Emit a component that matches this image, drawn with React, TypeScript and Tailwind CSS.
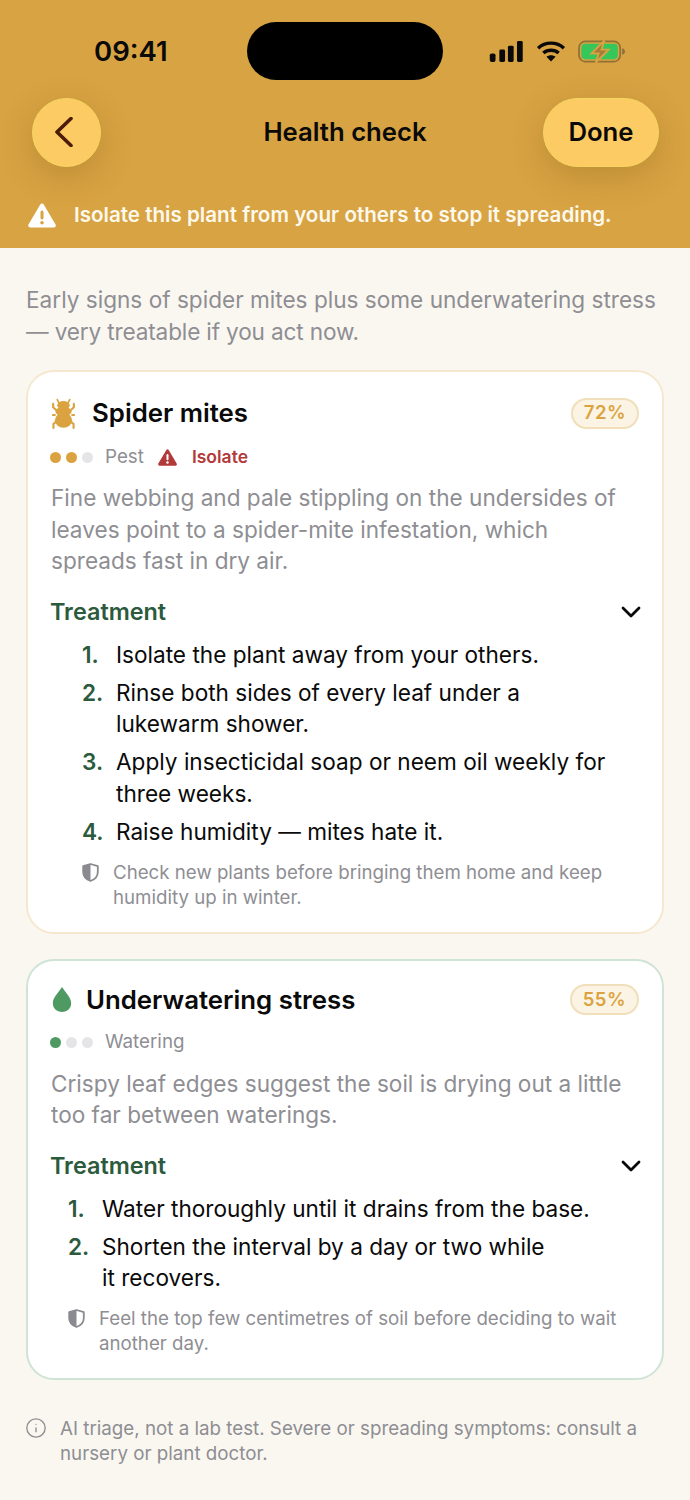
import { Info } from 'lucide-react'

function Signal() {
  return (
    <svg width="35" height="21" viewBox="0 0 35 22" fill="#0a0a0a">
      <rect x="0" y="13" width="6" height="9" rx="2" />
      <rect x="10" y="9" width="6" height="13" rx="1.5" />
      <rect x="19" y="5" width="6" height="17" rx="1.5" />
      <rect x="28.5" y="0" width="6" height="22" rx="1.5" />
    </svg>
  )
}

function Wifi() {
  return (
    <svg width="30" height="21" viewBox="0 0 31 22" fill="none" stroke="#0a0a0a" strokeWidth="3.6">
      <path d="M2 7.5C9.5 0.5 21.5 0.5 29 7.5" />
      <path d="M7.5 12.6C12 8.6 19 8.6 23.5 12.6" />
      <path d="M15.5 21.5L10.8 16.6C13.4 14.5 17.6 14.5 20.2 16.6Z" fill="#0a0a0a" stroke="none" />
    </svg>
  )
}

function Battery() {
  return (
    <svg width="48" height="23" viewBox="0 0 50 24" fill="none">
      <rect x="1" y="1.5" width="43" height="21" rx="6.5" stroke="#8f7138" strokeWidth="1.8" />
      <rect x="3.5" y="4" width="38" height="16" rx="4" fill="#35c759" />
      <path d="M46 8.5c2 .5 3 2 3 3.5s-1 3-3 3.5z" fill="#8f7138" />
      <path d="M27.500 0.500L14 14h7.500l-3 9.500L32 10h-7.500z" fill="#a67d38" stroke="#d8a342" strokeWidth="2" />
    </svg>
  )
}

function Bug() {
  return (
    <svg width="23" height="31" viewBox="0 0 24 32" fill="#dba33f">
      <path d="M5.500 1.500L7.500 5.500M18.500 1.500L16.500 5.500" stroke="#dba33f" strokeWidth="1.800" fill="none" strokeLinecap="round" />
      <ellipse cx="12" cy="7.500" rx="6.500" ry="4.500" />
      <ellipse cx="12" cy="14" rx="8.500" ry="4.800" />
      <ellipse cx="12" cy="23" rx="9" ry="7.800" />
      <path d="M4 12L1.200 9.500V6M20 12L22.800 9.500V6M3 17.500H1M21 17.500H23M4.500 24.500L1.500 27V31M19.500 24.500L22.500 27V31" stroke="#dba33f" strokeWidth="2.200" fill="none" strokeLinecap="round" />
    </svg>
  )
}

function Drop() {
  return (
    <svg width="20" height="27" viewBox="0 0 20 28" fill="#4f9a63">
      <path d="M10 1C13 6 19.500 11.500 19.500 18C19.500 23.500 15.500 27 10 27C4.500 27 0.500 23.500 0.500 18C0.500 11.500 7 6 10 1Z" />
    </svg>
  )
}

function Shield() {
  return (
    <svg width="17" height="19" viewBox="0 0 17 19" className="shrink-0">
      <path d="M8.500 1L15.800 3.200V9C15.800 13.500 12.500 16.600 8.500 18C4.500 16.600 1.200 13.500 1.200 9V3.200Z" fill="none" stroke="#8a8a90" strokeWidth="1.800" strokeLinejoin="round" />
      <path d="M8.500 1L1.200 3.200V9C1.200 13.500 4.500 16.600 8.500 18Z" fill="#8a8a90" />
    </svg>
  )
}

function Warning({ w, h, fill, mark }: { w: number; h: number; fill: string; mark: string }) {
  return (
    <svg width={w} height={h} viewBox="0 0 28 25" className="shrink-0">
      <path d="M14 2.500L25.800 22.500H2.200Z" fill={fill} stroke={fill} strokeWidth="4" strokeLinejoin="round" />
      <rect x="12.500" y="7.500" width="3" height="9" rx="1.500" fill={mark} />
      <circle cx="14" cy="19.800" r="1.800" fill={mark} />
    </svg>
  )
}

function Chevron() {
  return (
    <svg width="20" height="12" viewBox="0 0 20 12" fill="none" stroke="#0a0a0a" strokeWidth="2.800" strokeLinecap="round" strokeLinejoin="round" className="-mr-[2px]">
      <path d="M2 2L10 10L18 2" />
    </svg>
  )
}

function Dots({ n, color }: { n: number; color: string }) {
  return (
    <div className="-ml-[1px] flex gap-[5px]">
      {[0, 1, 2].map((i) => (
        <div key={i} className={`size-[11px] rounded-full ${i < n ? color : 'bg-[#e5e5e7]'}`} />
      ))}
    </div>
  )
}

type Props = {
  icon: React.ReactNode
  title: string
  pct: string
  border: string
  dots: React.ReactNode
  tag: string
  isolate?: boolean
  desc: string
  steps: string[]
  tip: string
  listPad: string
}

function Card({ icon, title, pct, border, dots, tag, isolate, desc, steps, tip, listPad }: Props) {
  return (
    <div className={`rounded-[28px] border-2 bg-white px-[23px] pb-[22px] ${border} ${isolate ? 'pt-[24px]' : 'pt-[23px]'}`}>
      <div className={`flex items-center ${isolate ? 'h-[34px]' : 'h-[32px]'}`}>
        <div className={`ml-[1px] flex items-center ${isolate ? 'mr-[17px]' : 'mr-[14px]'}`}>{icon}</div>
        <div className="text-[25.800px] leading-[34px] font-semibold text-[#0a0a0a]">{title}</div>
        <div className="ml-auto flex h-[31px] items-center rounded-full border-2 border-[#f0dfba] bg-[#fbf3e3] px-[11px] text-[18.500px] font-semibold tracking-[0.5px] text-[#dba33f]">
          {pct}
        </div>
      </div>
      <div className={`mt-[13px] flex items-center ${isolate ? 'h-[28px]' : 'h-[27px]'}`}>
        {dots}
        <span className="ml-[12px] text-[18.800px] text-[#8e8e93]">{tag}</span>
        {isolate && (
          <>
            <span className="mr-[15px] ml-[14px] flex">
              <Warning w={19} h={17} fill="#b23a3a" mark="#ffffff" />
            </span>
            <span className="text-[17.500px] font-semibold text-[#b23a3a]">Isolate</span>
          </>
        )}
      </div>
      <p className={`whitespace-pre-line text-[22.600px] leading-[31.500px] text-[#8e8e93] ${isolate ? 'mt-[11px]' : 'mt-[12px]'}`}>{desc}</p>
      <div className="mt-[18px] flex h-[34px] items-center justify-between">
        <span className="-ml-[1px] text-[23.400px] font-semibold text-[#2b5a3c]">Treatment</span>
        <Chevron />
      </div>
      <ol className={`mt-[10px] flex flex-col gap-[6.500px] ${listPad}`}>
        {steps.map((s, i) => (
          <li key={i} className="flex text-[22.600px] leading-[31.500px] text-[#0a0a0a]">
            <span className="w-[34px] shrink-0 font-semibold text-[#2b5a3c]">{i + 1}.</span>
            <span className="whitespace-pre-line">{s}</span>
          </li>
        ))}
      </ol>
      <div className={`mt-[12.500px] flex gap-[14px] text-[18.700px] leading-[25px] text-[#8e8e93] ${listPad}`}>
        <div className="pt-[3px]">
          <Shield />
        </div>
        <p className="whitespace-pre-line">{tip}</p>
      </div>
    </div>
  )
}

export default function App() {
  return (
    <div className="flex h-[1500px] w-[690px] flex-col overflow-hidden bg-[#faf7f1] font-['Inter',sans-serif]">
      <header className="h-[248px] bg-[#d8a342] px-[32px]">
        <div className="flex h-[98px] items-center pt-[4px]">
          <div className="mt-[2px] ml-[62px] w-[74px] text-[27.500px] font-semibold text-[#0a0a0a]">09:41</div>
          <div className="ml-[79px] h-[58px] w-[196px] rounded-full bg-black" />
          <div className="ml-[46px] flex items-center gap-[12px]">
            <Signal />
            <Wifi />
            <Battery />
          </div>
        </div>
        <div className="flex h-[68px] items-center justify-between">
          <div className="w-[116px]">
            <button className="flex size-[69px] items-center justify-center rounded-full border border-[#f5d660] bg-[#fdcb63] shadow-[0_10px_34px_rgba(90,60,10,0.22)]">
              <svg width="18" height="30" viewBox="0 0 18 30" fill="none" stroke="#4d1c08" strokeWidth="3.600" strokeLinecap="round" strokeLinejoin="round" className="mr-[5px]">
                <path d="M16 1.500L2 15L16 28.500" />
              </svg>
            </button>
          </div>
          <div className="text-[25.700px] font-semibold text-[#0a0a0a]">Health check</div>
          <button className="ml-[1px] -mr-[1px] flex h-[69px] w-[116px] items-center justify-center rounded-full border border-[#f5d660] bg-[#fdcb63] text-[25.700px] font-semibold text-[#0a0a0a] shadow-[0_10px_34px_rgba(90,60,10,0.22)]">
            Done
          </button>
        </div>
        <div className="-ml-[4px] mt-[34px] flex items-center gap-[18px] text-[20.600px] font-semibold text-[#fdf8ec]">
          <Warning w={28} h={25} fill="#ffffff" mark="#d8a342" />
          <span>Isolate this plant from your others to stop it spreading.</span>
        </div>
      </header>
      <main className="flex flex-col px-[26px]">
        <p className="mt-[36px] text-[22.600px] leading-[31.500px] text-[#8e8e93]">
          Early signs of spider mites plus some underwatering stress
          <br />
          <span className="tracking-[-0.15px]">— very treatable if you act now.</span>
        </p>
        <div className="mt-[23px] flex flex-col gap-[25px]">
          <Card
            icon={<Bug />}
            title="Spider mites"
            pct="72%"
            border="border-[#f5e8cf]"
            dots={<Dots n={2} color="bg-[#dba33f]" />}
            tag="Pest"
            isolate
            desc={'Fine webbing and pale stippling on the undersides of\nleaves point to a spider-mite infestation, which\nspreads fast in dry air.'}
            steps={[
              'Isolate the plant away from your others.',
              'Rinse both sides of every leaf under a\nlukewarm shower.',
              'Apply insecticidal soap or neem oil weekly for\nthree weeks.',
              'Raise humidity — mites hate it.',
            ]}
            tip={'Check new plants before bringing them home and keep\nhumidity up in winter.'}
            listPad="pl-[31px]"
          />
          <Card
            icon={<Drop />}
            title="Underwatering stress"
            pct="55%"
            border="border-[#cfe3d6]"
            dots={<Dots n={1} color="bg-[#4f9a63]" />}
            tag="Watering"
            desc={'Crispy leaf edges suggest the soil is drying out a little\ntoo far between waterings.'}
            steps={['Water thoroughly until it drains from the base.', 'Shorten the interval by a day or two while\nit recovers.']}
            tip={'Feel the top few centimetres of soil before deciding to wait\nanother day.'}
            listPad="pl-[17px]"
          />
        </div>
        <div className="mt-[36px] flex gap-[13px] text-[18.750px] leading-[25px] text-[#8e8e93]">
          <Info size={22} className="-ml-[1px] mt-[1px] shrink-0" strokeWidth={1.500} />
          <p className="whitespace-pre-line">{'AI triage, not a lab test. Severe or spreading symptoms: consult a\nnursery or plant doctor.'}</p>
        </div>
      </main>
    </div>
  )
}
